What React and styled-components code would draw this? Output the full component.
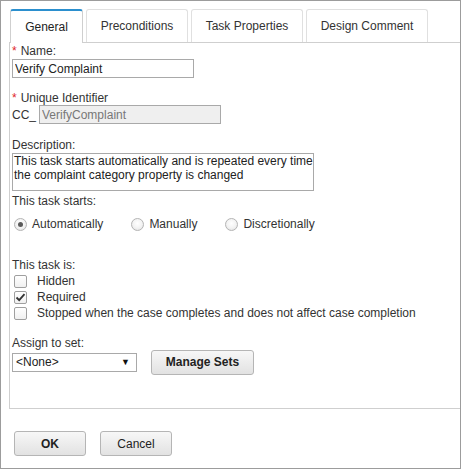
import styled, { createGlobalStyle } from 'styled-components';

const Global = createGlobalStyle`
    html, body {
        margin: 0;
        padding: 0;
        background: #fff;
    }
    body {
        font-family: "Liberation Sans", Arial, sans-serif;
        font-size: 12px;
        color: #333;
    }
`

const Frame = styled.div`
    width: 461px;
    height: 469px;
    box-sizing: border-box;
    border: 1px solid #9c9c9c;
    padding: 8px 0 0 8px;
    display: flex;
    flex-direction: column;
    background: #fff;
`

const TabRow = styled.div`
    display: flex;
    gap: 3px;
    height: 33px;
    padding-left: 1px;
    align-items: flex-start;
`

const Tab = styled.div`
    position: relative;
    box-sizing: border-box;
    width: ${p => p.w}px;
    height: ${p => (p.active ? '34px' : '33px')};
    display: flex;
    align-items: center;
    justify-content: center;
    background: #fff;
    color: ${p => (p.active ? '#222' : '#333')};
    border: 1px solid ${p => (p.active ? '#cfcfcf' : '#e0e0e0')};
    border-top: ${p => (p.active ? '2px solid #2b8fce' : '1px solid #e0e0e0')};
    border-bottom: none;
    border-radius: 3px 3px 0 0;
    z-index: ${p => (p.active ? 2 : 0)};
    white-space: nowrap;
`

const Panel = styled.div`
    box-sizing: border-box;
    height: 367px;
    border: 1px solid #cfcfcf;
    border-right: none;
    padding: 1px 0 0 2px;
    display: flex;
    flex-direction: column;
    align-items: flex-start;
`

const Label = styled.div`
    line-height: 14px;
    height: 14px;
    margin-top: ${p => p.mt || 0}px;
    white-space: nowrap;
`

const Star = styled.span`
    color: #e0262a;
    margin-right: 4px;
`

const TextInput = styled.input`
    box-sizing: border-box;
    width: ${p => p.w}px;
    height: 19px;
    margin: ${p => p.mt || 0}px 0 0 0;
    padding: 0 2px;
    border: 1px solid #a9a9a9;
    border-radius: 0;
    outline: none;
    font-family: "Liberation Sans", Arial, sans-serif;
    font-size: 12px;
    color: ${p => (p.disabled ? '#777' : '#222')};
    background: ${p => (p.disabled ? '#efefef' : '#fff')};
`

const IdRow = styled.div`
    display: flex;
    align-items: center;
    gap: 3px;
    height: 19px;
`

const TextBox = styled.div`
    box-sizing: border-box;
    width: 302px;
    height: 38px;
    margin-top: 1px;
    padding: 0 1px;
    border: 1px solid #a9a9a9;
    line-height: 14px;
    color: #222;
    white-space: nowrap;
`

const RadioRow = styled.div`
    display: flex;
    align-items: center;
    height: 14px;
    margin-top: 9px;
    padding-left: 2px;
    gap: 28px;
`

const Option = styled.div`
    display: flex;
    align-items: center;
    gap: 5px;
    white-space: nowrap;
`

const Radio = styled.span`
    box-sizing: border-box;
    width: 13px;
    height: 13px;
    border-radius: 50%;
    border: 1px solid #b4b4b4;
    background: radial-gradient(circle at 50% 40%, #fff 0%, #f2f2f2 55%, #dcdcdc 100%);
    display: flex;
    align-items: center;
    justify-content: center;
    &::after {
        content: '';
        display: ${p => (p.checked ? 'block' : 'none')};
        width: 5px;
        height: 5px;
        border-radius: 50%;
        background: #5a5a5a;
    }
`

const CheckList = styled.div`
    display: flex;
    flex-direction: column;
    gap: 2px;
    margin-top: 2px;
    padding-left: 2px;
`

const CheckRow = styled.div`
    display: flex;
    align-items: center;
    height: 14px;
    gap: 10px;
    white-space: nowrap;
`

const Box = styled.span`
    box-sizing: border-box;
    width: 13px;
    height: 13px;
    border: 1px solid #9f9f9f;
    border-radius: 2px;
    background: linear-gradient(#fff, #f0f0f0);
    display: flex;
    align-items: center;
    justify-content: center;
`

const SetRow = styled.div`
    display: flex;
    align-items: center;
    gap: 14px;
    height: 24px;
`

const Select = styled.div`
    box-sizing: border-box;
    width: 125px;
    height: 19px;
    border: 1px solid #a9a9a9;
    padding: 0 6px 0 3px;
    display: flex;
    align-items: center;
    justify-content: space-between;
    color: #222;
    background: #fff;
`

const Arrow = styled.span`
    font-size: 9px;
    color: #111;
`

const Button = styled.button`
    box-sizing: border-box;
    width: ${p => p.w}px;
    height: ${p => p.h || 25}px;
    border: 1px solid #b5b5b5;
    border-radius: 3px;
    background: linear-gradient(#f7f7f7, #e2e2e2);
    font-family: "Liberation Sans", Arial, sans-serif;
    font-size: 12px;
    font-weight: ${p => (p.bold ? 'bold' : 'normal')};
    color: #222;
    padding: 0;
`

const Footer = styled.div`
    flex: 1;
    display: flex;
    gap: 14px;
    padding: 22px 0 0 5px;
`

const Check = () => (
    <svg width="11" height="11" viewBox="0 0 11 11">
        <path d="M1.5 5.5 L4.2 8.2 L9.5 2.2" fill="none" stroke="#333" strokeWidth="1.8" />
    </svg>
)

const App = () => {
    return (
        <Frame>
            <Global />
            <TabRow>
                <Tab active w={73}>General</Tab>
                <Tab w={102}>Preconditions</Tab>
                <Tab w={112}>Task Properties</Tab>
                <Tab w={122}>Design Comment</Tab>
            </TabRow>
            <Panel>
                <Label><Star>*</Star>Name:</Label>
                <TextInput w={182} mt={1} readOnly defaultValue="Verify Complaint" />
                <Label mt={13}><Star>*</Star>Unique Identifier</Label>
                <IdRow>
                    <span>CC_</span>
                    <TextInput w={182} disabled defaultValue="VerifyComplaint" />
                </IdRow>
                <Label mt={14}>Description:</Label>
                <TextBox>
                    This task starts automatically and is repeated every time<br />
                    the complaint category property is changed
                </TextBox>
                <Label mt={3}>This task starts:</Label>
                <RadioRow>
                    <Option><Radio checked />Automatically</Option>
                    <Option><Radio />Manually</Option>
                    <Option><Radio />Discretionally</Option>
                </RadioRow>
                <Label mt={27}>This task is:</Label>
                <CheckList>
                    <CheckRow><Box />Hidden</CheckRow>
                    <CheckRow><Box><Check /></Box>Required</CheckRow>
                    <CheckRow><Box />Stopped when the case completes and does not affect case completion</CheckRow>
                </CheckList>
                <Label mt={16}>Assign to set:</Label>
                <SetRow>
                    <Select>
                        <span>&lt;None&gt;</span>
                        <Arrow>▼</Arrow>
                    </Select>
                    <Button w={103} bold>Manage Sets</Button>
                </SetRow>
            </Panel>
            <Footer>
                <Button w={72} bold>OK</Button>
                <Button w={72}>Cancel</Button>
            </Footer>
        </Frame>
    );
}

export default App;
